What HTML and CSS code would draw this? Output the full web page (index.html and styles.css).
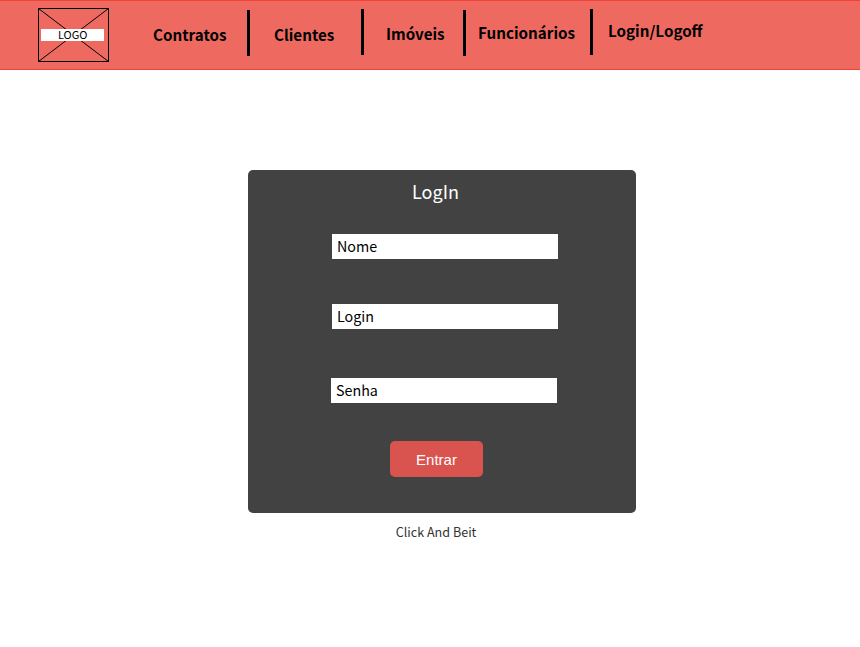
FILE: index.html
```
<!DOCTYPE html>
<html lang="pt-BR">
<head>
<meta charset="utf-8">
<title>LogIn</title>
<link rel="stylesheet" href="styles.css">
</head>
<body>
<header class="topbar">
  <div class="logo">
    <svg class="logo-frame" width="71" height="54" viewBox="0 0 71 54" fill="none" stroke="#000"><path d="M.5 .5h70v53H.5zM.5 .5l70 53M70.5 .5l-70 53"/></svg>
    <span class="logo-label">LOGO</span>
  </div>
  <nav class="menu">
    <a class="item contratos">Contratos</a>
    <a class="item clientes">Clientes</a>
    <a class="item imoveis">Imóveis</a>
    <a class="item funcionarios">Funcionários</a>
    <a class="item sessao">Login/Logoff</a>
  </nav>
</header>
<main class="content">
  <form class="card">
    <h1 class="title">LogIn</h1>
    <div class="field nome">Nome</div>
    <div class="field login">Login</div>
    <div class="field senha">Senha</div>
    <button class="submit" type="button">Entrar</button>
  </form>
  <p class="credit">Click And Beit</p>
</main>
</body>
</html>
```
FILE: styles.css
```
* { box-sizing: border-box; }
body {
  margin: 0;
  background: #fff;
  color: #000;
  font-family: "Noto Sans CJK SC", "Noto Sans", sans-serif;
}
.topbar {
  display: flex;
  align-items: flex-start;
  height: 70px;
  padding-left: 38px;
  background: #ee6a60;
  border-top: 1px solid #f44336;
  border-bottom: 1px solid #f44336;
}
.logo {
  display: grid;
  place-items: center;
  width: 71px;
  height: 54px;
  margin-top: 7px;
}
.logo-frame, .logo-label { grid-area: 1 / 1; }
.logo-label {
  z-index: 1;
  width: 63.4px;
  height: 12px;
  margin-right: 1.6px;
  background: #fff;
  font-size: 11px;
  line-height: 10px;
  text-align: center;
}
.menu {
  display: flex;
  align-items: flex-start;
  padding-left: 44px;
}
.item {
  height: 46px;
  border-right: 3px solid #000;
  font-size: 15.2px;
  font-weight: 700;
  line-height: 22px;
  white-space: nowrap;
}
.contratos { width: 97px; margin-top: 9px; padding-top: 13px; }
.clientes { width: 114px; margin-top: 8px; padding: 14px 0 0 24px; }
.imoveis { width: 102px; margin-top: 9px; padding: 12px 0 0 22px; }
.funcionarios { width: 127px; margin-top: 8px; padding: 12px 0 0 12px; }
.sessao { margin-top: 8px; padding: 10px 0 0 15px; border-right: 0; }
.content { padding: 100px 0 0 248px; }
.card {
  display: flex;
  flex-direction: column;
  align-items: flex-start;
  width: 388px;
  height: 343px;
  background: #424242;
  border-radius: 5px;
}
.title {
  width: 375px;
  margin: 6px 0 28px;
  color: #fff;
  font-size: 18px;
  font-weight: 400;
  line-height: 30px;
  text-align: center;
}
.field {
  width: 226px;
  height: 25px;
  margin-left: 84px;
  padding-left: 5px;
  background: #fff;
  font-size: 14.3px;
  line-height: 23px;
}
.login { margin-top: 45px; }
.senha { margin: 49px 0 0 83px; }
.submit {
  width: 93px;
  height: 36px;
  margin: 38px 0 0 142px;
  padding: 1px 0 0;
  border: 0;
  border-radius: 5px;
  background: #d9534f;
  color: #fff;
  font: 15px/36px "Liberation Sans", sans-serif;
}
.credit {
  width: 376px;
  margin: 9px 0 0;
  color: #333;
  font-size: 12.6px;
  line-height: 20px;
  text-align: center;
}
```
